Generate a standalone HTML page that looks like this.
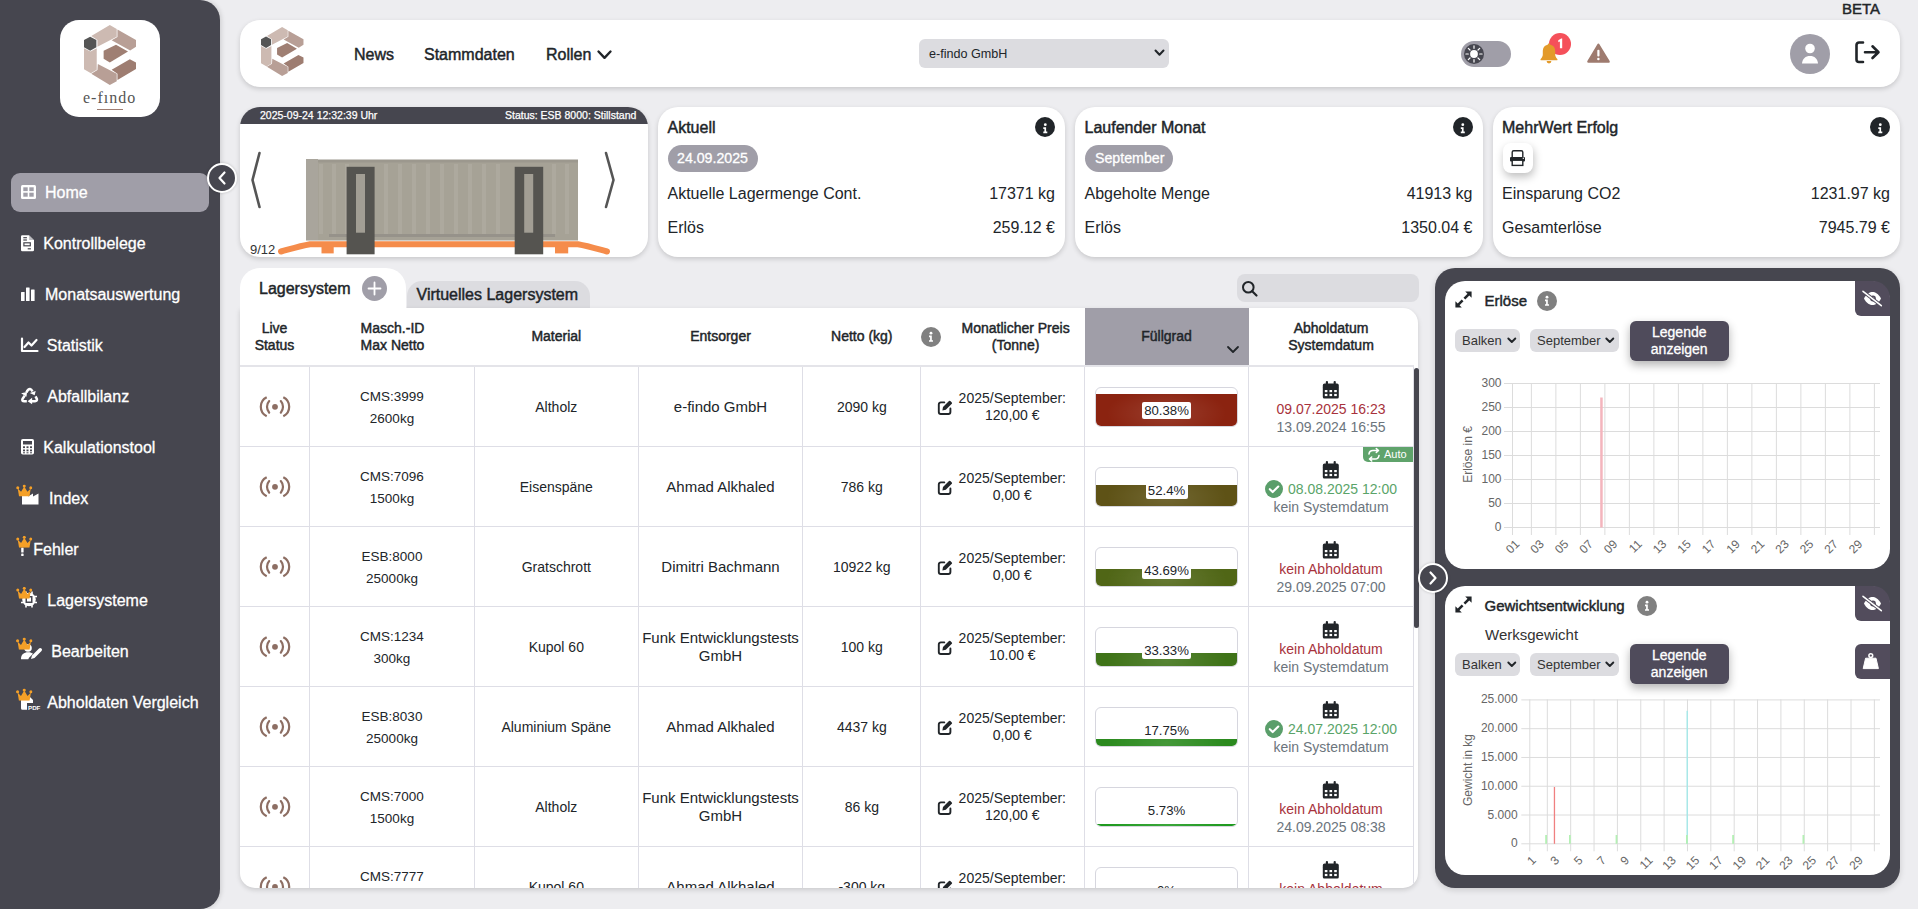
<!DOCTYPE html>
<html><head><meta charset="utf-8">
<style>
*{box-sizing:border-box;margin:0;padding:0}
html,body{width:1918px;height:909px;overflow:hidden}
body{background:#ededf0;font-family:"Liberation Sans",sans-serif;color:#212529;position:relative}
.a{position:absolute;white-space:nowrap}
.t16{font-size:16px;line-height:20px}
.t14{font-size:14px;line-height:17px}
.med{-webkit-text-stroke:0.45px currentColor}
.bold{-webkit-text-stroke:0.5px currentColor}
.card{position:absolute;background:#fff;border-radius:20px;box-shadow:0 2px 5px rgba(0,0,0,.16)}
svg{position:absolute;overflow:visible}
.nav{position:absolute;color:#fff;font-size:16px;line-height:20px;white-space:nowrap;-webkit-text-stroke:0.3px #fff}
.c{text-align:center}
.r{text-align:right}
</style></head>
<body>
<svg width="0" height="0" style="position:absolute">
<defs>
<symbol id="lg" viewBox="50 45 715 825">
<polygon fill="#cdbab2" points="150,195 405,45 500,100 500,205 235,345 235,250"/>
<polygon fill="#b89f96" points="510,108 765,250 765,345 685,395 430,255 510,210"/>
<polygon fill="#9f7f73" points="320,400 490,315 655,410 405,560 320,510"/>
<polygon fill="#cdbab2" points="50,365 140,410 225,365 225,660 145,710 50,655"/>
<polygon fill="#b89f96" points="150,715 235,665 240,580 500,715 500,820 405,870"/>
<polygon fill="#9e7d71" points="510,715 430,660 680,515 765,560 765,650 510,800"/>
<polygon fill="#555555" points="135,205 220,252 220,350 135,398 50,350 50,252"/>
</symbol>
<symbol id="crown" viewBox="0 0 16 12">
<path fill="#f5a027" d="M1.5 4 L4.8 7.2 L8 2 L11.2 7.2 L14.5 4 L13.2 12 L2.8 12 Z"/>
<circle cx="1.5" cy="3.2" r="1.5" fill="#f5a027"/><circle cx="8" cy="1.5" r="1.5" fill="#f5a027"/><circle cx="14.5" cy="3.2" r="1.5" fill="#f5a027"/>
</symbol>
</defs></svg>
<div class="a" style="left:0;top:0;width:220px;height:909px;background:#46464f;border-radius:0 20px 20px 0;box-shadow:1px 0 5px rgba(0,0,0,.15)"></div>
<div class="a" style="left:60px;top:20px;width:100px;height:97px;background:#fff;border-radius:19px"></div>
<svg style="left:83.6px;top:25.3px" width="52" height="60"><use href="#lg"/></svg>
<div class="a" style="left:83px;top:89px;font-family:'Liberation Serif',serif;font-size:16px;line-height:18px;color:#555;letter-spacing:1px">e-fındo</div>
<div class="a" style="left:97px;top:108.5px;width:25.5px;height:1.6px;background:#9e7d71"></div>
<div class="a" style="left:11px;top:173px;width:198px;height:39px;background:#a09ea8;border-radius:9px"></div>
<!-- icons -->
<svg style="left:0;top:0" width="220" height="909">
 <g fill="#fff">
  <!-- home grid -->
  <rect x="21" y="185" width="15" height="14" rx="1.5"/>
  <rect x="23.3" y="187.3" width="4.4" height="3.8" fill="#a09ea8"/><rect x="29.3" y="187.3" width="4.4" height="3.8" fill="#a09ea8"/>
  <rect x="23.3" y="192.7" width="4.4" height="4" fill="#a09ea8"/><rect x="29.3" y="192.7" width="4.4" height="4" fill="#a09ea8"/>
  <!-- file lines -->
  <path d="M22.3 235.2 h6.8 l4.9 4.9 v9.9 a1.3 1.3 0 0 1 -1.3 1.3 h-10.4 a1.3 1.3 0 0 1 -1.3 -1.3 v-13.5 a1.3 1.3 0 0 1 1.3 -1.3z"/>
  <g fill="#46464f"><path d="M29.1 235.2 v4.9 h4.9z" opacity=".35"/>
  <rect x="23.3" y="237.1" width="3.6" height="1.2"/><rect x="23.3" y="239.4" width="3.6" height="1.2"/>
  <rect x="23.3" y="242.2" width="7.6" height="4.2"/><rect x="27.7" y="248.2" width="3.2" height="1.2"/></g>
  <rect x="24.5" y="243.4" width="5.2" height="1.8" fill="#fff"/>
  <!-- bar chart -->
  <rect x="21" y="292" width="3.6" height="9" rx=".5"/><rect x="26" y="287.5" width="3.6" height="13.5" rx=".5"/><rect x="31" y="289.5" width="3.6" height="11.5" rx=".5"/><rect x="36" y="292" width="0" height="0"/>
 </g>
 <g fill="none" stroke="#fff" stroke-width="2.2" stroke-linecap="round" stroke-linejoin="round">
  <!-- line chart -->
  <path d="M22 338.5 V351 H37.5"/>
  <path d="M24.5 347 L28.5 342.5 L31.5 345.5 L36.5 340"/>
 </g>
<svg x="16" y="384" width="26" height="24" viewBox="0 0 985 909" overflow="visible"><g fill="none" stroke="#fff" stroke-width="95" stroke-linejoin="round">
  <path d="M395 320 Q 455 185 535 190 Q 585 195 625 285"/>
  <path d="M330 440 L 245 570 Q 215 650 310 650 L 410 650"/>
  <path d="M740 470 L 790 560 Q 815 650 720 650 L 570 650"/>
 </g><g fill="#fff"><polygon points="520,345 745,265 705,425"/><polygon points="195,355 420,300 395,480"/><polygon points="610,520 440,650 610,770"/></g></svg>

 <g fill="#fff">
  <!-- calculator -->
  <rect x="21" y="439" width="13" height="15.5" rx="1.8"/>
  <rect x="23" y="441" width="9" height="3.5" fill="#46464f"/>
  <g fill="#46464f"><rect x="23" y="446.3" width="2" height="1.8"/><rect x="26.5" y="446.3" width="2" height="1.8"/><rect x="30" y="446.3" width="2" height="1.8"/>
  <rect x="23" y="449.5" width="2" height="1.8"/><rect x="26.5" y="449.5" width="2" height="1.8"/><rect x="30" y="449.5" width="2" height="1.8"/>
  <rect x="23" y="452.3" width="2" height="1"/><rect x="26.5" y="452.3" width="2" height="1"/><rect x="30" y="452.3" width="2" height="1"/></g>
  <!-- industry -->
  <path d="M22 504.5 V496 L28 493.5 V496.5 L33 493.5 V496.5 L38.5 493.5 V504.5 Z"/>
  <!-- exclamation -->
  <rect x="21.2" y="547.5" width="2.4" height="5" rx=".6"/><rect x="21.2" y="553.5" width="2.4" height="2.6" rx=".6"/>
  <!-- chip gear -->
  <circle cx="29" cy="599.5" r="6.8"/>
  <g stroke="#fff" stroke-width="1.6"><path d="M21 596.5h16M21 602.5h16M26 591.5v16M32 591.5v16"/></g>
  <rect x="25.5" y="596" width="7" height="7" fill="#46464f"/><rect x="27" y="597.5" width="4" height="4" fill="#fff"/>
  <!-- user pen -->
  <circle cx="28" cy="648" r="3.8"/>
  <path d="M21 659.2 c0 -5 3 -7 7 -7 c2.5 0 4 .6 5 1.5 l-4 4 l-.7 1.5 z"/>
  <path d="M31 659 l1 -3.5 l7 -7 a1.5 1.5 0 0 1 2.5 2.5 l-7 7 z"/>
  <!-- pdf file -->
  <path d="M21 696 h8 l4 4 v3 h-6 v6.8 h-4.5 a1.5 1.5 0 0 1 -1.5 -1.5 z"/>
 </g>
 <text x="28" y="709.5" font-family="Liberation Sans" font-weight="bold" font-size="6.2" fill="#fff">PDF</text>
 <use href="#crown" x="16" y="484.5" width="16.5" height="12"/>
 <use href="#crown" x="16" y="535.7" width="16.5" height="12"/>
 <use href="#crown" x="16" y="586.8" width="16.5" height="12"/>
 <use href="#crown" x="16" y="637.5" width="16.5" height="12.3"/>
 <use href="#crown" x="16" y="688.5" width="16.5" height="12.3"/>
</svg>
<div class="nav" style="left:45.0px;top:183.3px">Home</div>
<div class="nav" style="left:43.3px;top:234.3px">Kontrollbelege</div>
<div class="nav" style="left:45.0px;top:285.3px">Monatsauswertung</div>
<div class="nav" style="left:46.8px;top:336.3px">Statistik</div>
<div class="nav" style="left:47.3px;top:387.3px">Abfallbilanz</div>
<div class="nav" style="left:43.3px;top:438.3px">Kalkulationstool</div>
<div class="nav" style="left:49.1px;top:489.3px">Index</div>
<div class="nav" style="left:33.3px;top:540.3px">Fehler</div>
<div class="nav" style="left:47.3px;top:591.3px">Lagersysteme</div>
<div class="nav" style="left:51.3px;top:642.3px">Bearbeiten</div>
<div class="nav" style="left:47.3px;top:693.3px">Abholdaten Vergleich</div>
<!-- collapse circle -->
<div class="a" style="left:207px;top:162.5px;width:30px;height:30px;border-radius:50%;background:#46464f;border:2.5px solid #fff;box-shadow:0 0 3px rgba(0,0,0,.2)"></div>
<svg style="left:207px;top:162.5px" width="30" height="30"><path d="M17.5 9.5 L12.5 15 L17.5 20.5" fill="none" stroke="#fff" stroke-width="2.2" stroke-linecap="round" stroke-linejoin="round"/></svg>
<div class="a" style="left:1842px;top:0px;font-size:15px;line-height:18px;color:#212529" ><span class="med">BETA</span></div>
<div class="card" style="left:240px;top:20px;width:1660px;height:67px"></div>
<svg style="left:260px;top:27px" width="44.5" height="49"><use href="#lg" preserveAspectRatio="none"/></svg>
<div class="a med" style="left:354px;top:44.5px;font-size:16px;line-height:20px">News</div>
<div class="a med" style="left:424px;top:44.5px;font-size:16px;line-height:20px">Stammdaten</div>
<div class="a med" style="left:546px;top:44.5px;font-size:16px;line-height:20px">Rollen</div>
<svg style="left:597px;top:50px" width="16" height="10"><path d="M1.5 1.5 L7.5 7.8 L13.5 1.5" fill="none" stroke="#212529" stroke-width="2.4" stroke-linecap="round" stroke-linejoin="round"/></svg>
<div class="a" style="left:919px;top:39px;width:250px;height:29px;background:#dcdce0;border-radius:6px"></div>
<div class="a" style="left:929px;top:46px;font-size:12.6px;line-height:16px;color:#212529">e-findo GmbH</div>
<svg style="left:1154px;top:49px" width="12" height="9"><path d="M1.5 1.5 L5.5 5.8 L9.5 1.5" fill="none" stroke="#212529" stroke-width="2" stroke-linecap="round" stroke-linejoin="round"/></svg>
<!-- toggle -->
<div class="a" style="left:1461px;top:41px;width:50px;height:26px;background:#a09ea8;border-radius:13px"></div>
<svg style="left:1464px;top:44px" width="20" height="20">
 <circle cx="10" cy="10" r="10" fill="#46464f"/>
 <circle cx="10" cy="10" r="3.9" fill="#fff"/>
 <g stroke="#fff" stroke-width="1.2" stroke-linecap="round">
  <path d="M10 1.9v2.4M10 15.7v2.4M1.9 10h2.4M15.7 10h2.4M4.3 4.3l1.7 1.7M14 14l1.7 1.7M4.3 15.7l1.7-1.7M14 6l1.7-1.7"/>
 </g>
</svg>
<!-- bell -->
<div class="a" style="left:1549px;top:33px;width:22px;height:22px;border-radius:50%;background:#f5505a"></div>
<svg style="left:1549px;top:33px" width="22" height="22"><path d="M9.3 7.2 L12.2 5.6 H13.2 V15.2 H10.9 V8.6 L9.3 9.3 Z" fill="#fff"/></svg>
<svg style="left:1538px;top:42px" width="24" height="24">
 <path d="M11 1.5 c0.8 0 1.2 .5 1.3 1.3 c3.1 .6 4.9 3 4.9 6 v3.6 c0 1.6 .8 3.2 2.1 4.5 c.5 .6 .1 1.3 -.6 1.3 H3.3 c-.7 0 -1.1 -.7 -.6 -1.3 c1.3 -1.3 2.1 -2.9 2.1 -4.5 v-3.6 c0 -3 1.8 -5.4 4.9 -6 c.1 -.8 .5 -1.3 1.3 -1.3z" fill="#e39a2a"/>
 <path d="M8.6 19.1 h4.8 a2.4 2.4 0 0 1 -4.8 0z" fill="#e39a2a"/>
</svg>
<!-- warning -->
<svg style="left:1587px;top:43px" width="24" height="21">
 <path d="M11.4 1.8 L21.6 18.6 H1.4 Z" fill="#9e7b6f" stroke="#9e7b6f" stroke-width="2.4" stroke-linejoin="round"/>
 <rect x="10.3" y="6.8" width="2.2" height="6.6" rx="1" fill="#fff"/><circle cx="11.4" cy="16" r="1.25" fill="#fff"/>
</svg>
<!-- avatar -->
<div class="a" style="left:1790px;top:34px;width:40px;height:40px;border-radius:50%;background:#a09ea8"></div>
<svg style="left:1790px;top:34px" width="40" height="40">
 <circle cx="20" cy="14.5" r="4.8" fill="#fff"/>
 <path d="M12 29.5 c0.5 -5 3.5 -7.5 8 -7.5 s7.5 2.5 8 7.5 z" fill="#fff"/>
</svg>
<!-- logout -->
<svg style="left:1854px;top:40px" width="28" height="26">
 <path d="M9 2.5 H5 a2.5 2.5 0 0 0 -2.5 2.5 V19.5 a2.5 2.5 0 0 0 2.5 2.5 H9" fill="none" stroke="#212529" stroke-width="2.6" stroke-linecap="round"/>
 <path d="M11 12.2 H24.5 M18.5 6.3 L24.5 12.2 L18.5 18" fill="none" stroke="#212529" stroke-width="2.6" stroke-linecap="round" stroke-linejoin="round"/>
</svg>
<!-- carousel card -->
<div class="card" style="left:240px;top:107px;width:408px;height:150px;overflow:hidden">
  <div class="a" style="left:0;top:0;width:408px;height:17px;background:#46464f"></div>
</div>
<div class="a med" style="left:260px;top:108px;font-size:10.5px;line-height:14px;color:#fff;-webkit-text-stroke:0.25px #fff">2025-09-24 12:32:39 Uhr</div>
<div class="a med" style="left:505px;top:108px;font-size:10.5px;line-height:14px;color:#fff;-webkit-text-stroke:0.25px #fff">Status: ESB 8000: Stillstand</div>
<svg style="left:240px;top:107px" width="408" height="150">
 <path d="M19.5 46 L12.5 73 L19.5 100" fill="none" stroke="#555" stroke-width="2.6" stroke-linecap="round" stroke-linejoin="round"/>
 <path d="M366 46 L373.5 73 L366 100" fill="none" stroke="#555" stroke-width="2.6" stroke-linecap="round" stroke-linejoin="round"/>
 <!-- container body -->
 <rect x="66" y="53.5" width="272" height="80" fill="#a6a296"/>
 <rect x="66" y="52.5" width="272" height="3" fill="#9c988e"/>
 <g fill="#b3afa6" opacity=".55">
  <rect x="79" y="57" width="4" height="70"/><rect x="92" y="57" width="4" height="70"/><rect x="105" y="57" width="4" height="70"/>
  <rect x="144" y="57" width="4" height="70"/><rect x="158" y="57" width="4" height="70"/><rect x="172" y="57" width="4" height="70"/><rect x="186" y="57" width="4" height="70"/><rect x="200" y="57" width="4" height="70"/><rect x="214" y="57" width="4" height="70"/><rect x="228" y="57" width="4" height="70"/><rect x="242" y="57" width="4" height="70"/><rect x="256" y="57" width="4" height="70"/>
  <rect x="312" y="57" width="4" height="70"/><rect x="325" y="57" width="4" height="70"/>
 </g>
 <rect x="66" y="52" width="12" height="81" fill="#a9a59c"/>
 <rect x="89" y="127" width="226" height="3" fill="#96928a"/>
 <!-- orange base -->
 <path d="M41 144.5 C52 141.5 60 139 70 137.2 H338 C348 139 356 141.5 367 144.5" fill="none" stroke="#f58c4b" stroke-width="6" stroke-linecap="round"/>
 <rect x="81.5" y="139" width="12.2" height="7.4" fill="#f58c4b"/>
 <rect x="315" y="139" width="13.2" height="7.4" fill="#f58c4b"/>
 <!-- posts -->
 <rect x="106.6" y="59.8" width="28" height="87.5" fill="#555450"/>
 <rect x="116" y="67" width="9" height="58.7" fill="#a29e94"/>
 <rect x="274.7" y="59.8" width="28.5" height="87.5" fill="#555450"/>
 <rect x="284.2" y="67" width="9" height="58.7" fill="#a29e94"/>
</svg>
<div class="a" style="left:250px;top:242px;font-size:13px;line-height:15px;color:#333">9/12</div>

<!-- Aktuell -->
<div class="card" style="left:658px;top:107px;width:407px;height:150px"></div>
<div class="a med" style="left:667.5px;top:118px;font-size:16px;line-height:20px">Aktuell</div>
<div class="a" style="left:1035px;top:117px;width:20px;height:20px;border-radius:50%;background:#212529"></div>
<div class="a" style="left:668px;top:145px;width:90px;height:27px;border-radius:14px;background:#a09ea8"></div>
<div class="a med" style="left:677px;top:149px;font-size:14.2px;line-height:18px;color:#fff;-webkit-text-stroke:0.3px #fff">24.09.2025</div>
<div class="a" style="left:667.5px;top:183.5px;font-size:16px;line-height:20px">Aktuelle Lagermenge Cont.</div>
<div class="a r" style="left:855px;top:183.5px;width:200px;font-size:16px;line-height:20px">17371 kg</div>
<div class="a" style="left:667.5px;top:217.7px;font-size:16px;line-height:20px">Erlös</div>
<div class="a r" style="left:855px;top:217.7px;width:200px;font-size:16px;line-height:20px">259.12 €</div>

<!-- Laufender Monat -->
<div class="card" style="left:1075px;top:107px;width:408px;height:150px"></div>
<div class="a med" style="left:1084.5px;top:118px;font-size:16px;line-height:20px">Laufender Monat</div>
<div class="a" style="left:1452.5px;top:117px;width:20px;height:20px;border-radius:50%;background:#212529"></div>
<div class="a" style="left:1085px;top:145px;width:88px;height:27px;border-radius:14px;background:#a09ea8"></div>
<div class="a med" style="left:1095px;top:149px;font-size:14.2px;line-height:18px;color:#fff;-webkit-text-stroke:0.3px #fff">September</div>
<div class="a" style="left:1084.5px;top:183.5px;font-size:16px;line-height:20px">Abgeholte Menge</div>
<div class="a r" style="left:1272.5px;top:183.5px;width:200px;font-size:16px;line-height:20px">41913 kg</div>
<div class="a" style="left:1084.5px;top:217.7px;font-size:16px;line-height:20px">Erlös</div>
<div class="a r" style="left:1272.5px;top:217.7px;width:200px;font-size:16px;line-height:20px">1350.04 €</div>

<!-- MehrWert -->
<div class="card" style="left:1493px;top:107px;width:407px;height:150px"></div>
<div class="a med" style="left:1502px;top:118px;font-size:16px;line-height:20px">MehrWert Erfolg</div>
<div class="a" style="left:1870px;top:117px;width:20px;height:20px;border-radius:50%;background:#212529"></div>
<div class="a" style="left:1503px;top:143px;width:30px;height:30px;border-radius:8px;background:#fff;box-shadow:1px 4px 9px rgba(0,0,0,.25)"></div>
<svg style="left:1503px;top:143px" width="30" height="30">
 <path d="M9.2 14 V9.3 a1.5 1.5 0 0 1 1.5 -1.5 h7.6 a1.5 1.5 0 0 1 1.5 1.5 V14" fill="none" stroke="#212529" stroke-width="1.4"/>
 <rect x="7" y="14" width="15" height="4.6" rx="1" fill="#212529"/>
 <rect x="9.2" y="17.2" width="10.6" height="5.2" fill="#fff" stroke="#212529" stroke-width="1.4"/>
 <circle cx="20.3" cy="15.2" r=".7" fill="#fff"/>
</svg>
<div class="a" style="left:1502px;top:183.5px;font-size:16px;line-height:20px">Einsparung CO2</div>
<div class="a r" style="left:1690px;top:183.5px;width:200px;font-size:16px;line-height:20px">1231.97 kg</div>
<div class="a" style="left:1502px;top:217.7px;font-size:16px;line-height:20px">Gesamterlöse</div>
<div class="a r" style="left:1690px;top:217.7px;width:200px;font-size:16px;line-height:20px">7945.79 €</div>
<svg style="left:0;top:0" width="1918" height="300">
 <g fill="#fff">
  <circle cx="1045.3" cy="124.7" r="1.4"/><path d="M1043.3 127.3 h2.8 v4.3 h1.2 v1.6 h-4 v-1.6 h1.1 v-2.7 h-1.1z"/>
  <circle cx="1462.8" cy="124.7" r="1.4"/><path d="M1460.8 127.3 h2.8 v4.3 h1.2 v1.6 h-4 v-1.6 h1.1 v-2.7 h-1.1z"/>
  <circle cx="1880.3" cy="124.7" r="1.4"/><path d="M1878.3 127.3 h2.8 v4.3 h1.2 v1.6 h-4 v-1.6 h1.1 v-2.7 h-1.1z"/>
 </g>
</svg>
<div class="a" style="left:407px;top:281px;width:183px;height:28px;background:#dcdce0;border-radius:15px 15px 0 0"></div>
<div class="a med" style="left:416.5px;top:285px;font-size:16px;line-height:20px">Virtuelles Lagersystem</div>
<div class="a" style="left:240px;top:308px;width:1178px;height:580px;background:#fff;border-radius:0 15px 15px 15px;box-shadow:0 2px 5px rgba(0,0,0,.15)"></div>
<div class="a" style="left:240px;top:268px;width:166px;height:45px;background:#fff;border-radius:20px 20px 0 0"></div>
<div class="a med" style="left:259px;top:279px;font-size:16px;line-height:20px">Lagersystem</div>
<div class="a" style="left:361.8px;top:275.9px;width:25px;height:25px;border-radius:50%;background:#a09ea8"></div>
<svg style="left:361.8px;top:275.9px" width="25" height="25"><path d="M12.5 6.5v12M6.5 12.5h12" stroke="#fff" stroke-width="1.8" stroke-linecap="round"/></svg>
<div class="a" style="left:1237px;top:273.5px;width:181.5px;height:28.5px;background:#dcdce0;border-radius:8px"></div>
<svg style="left:1241px;top:280px" width="18" height="18"><circle cx="7.3" cy="7.3" r="5.3" fill="none" stroke="#212529" stroke-width="2"/><path d="M11.2 11.2 L15.5 15.5" stroke="#212529" stroke-width="2.2" stroke-linecap="round"/></svg>
<div class="a" style="left:1085px;top:308px;width:163.5px;height:57px;background:#a09ea8"></div>
<svg style="left:1226px;top:345px" width="14" height="10"><path d="M2 2 L7 7 L12 2" fill="none" stroke="#212529" stroke-width="1.8" stroke-linecap="round" stroke-linejoin="round"/></svg>
<div class="a" style="left:240px;top:365px;width:1174px;height:2px;background:#e4e4e9"></div>
<div class="a c med" style="left:174.5px;top:319.7px;width:200px;font-size:14px;line-height:17px">Live</div>
<div class="a c med" style="left:174.5px;top:336.7px;width:200px;font-size:14px;line-height:17px">Status</div>
<div class="a c med" style="left:292.5px;top:319.7px;width:200px;font-size:14px;line-height:17px">Masch.-ID</div>
<div class="a c med" style="left:292.5px;top:336.7px;width:200px;font-size:14px;line-height:17px">Max Netto</div>
<div class="a c med" style="left:456.29999999999995px;top:327.8px;width:200px;font-size:14px;line-height:17px">Material</div>
<div class="a c med" style="left:620.5px;top:327.8px;width:200px;font-size:14px;line-height:17px">Entsorger</div>
<div class="a c med" style="left:761.8px;top:327.8px;width:200px;font-size:14px;line-height:17px">Netto (kg)</div>
<div class="a c med" style="left:915.6px;top:319.7px;width:200px;font-size:14px;line-height:17px">Monatlicher Preis</div>
<div class="a c med" style="left:915.6px;top:336.7px;width:200px;font-size:14px;line-height:17px">(Tonne)</div>
<div class="a c med" style="left:1066.5px;top:327.8px;width:200px;font-size:14px;line-height:17px">Füllgrad</div>
<div class="a c med" style="left:1231px;top:319.7px;width:200px;font-size:14px;line-height:17px">Abholdatum</div>
<div class="a c med" style="left:1231px;top:336.7px;width:200px;font-size:14px;line-height:17px">Systemdatum</div>
<div class="a" style="left:921px;top:327px;width:20px;height:20px;border-radius:50%;background:#808080"></div>
<svg style="left:921px;top:327px" width="20" height="20"><circle cx="10" cy="6.2" r="1.4" fill="#fff"/><path d="M8 8.6 h2.8 v4.6 h1.2 v1.6 h-4 v-1.6 h1.1 v-3 h-1.1z" fill="#fff"/></svg>
<div class="a" style="left:240px;top:367px;width:1178px;height:521px;overflow:hidden;border-radius:0 0 15px 15px">
<div class="a" style="left:-240px;top:-367px;width:1918px;height:909px">
<svg style="left:0;top:0" width="1918" height="909"><g stroke="#dedee6" stroke-width="1">
<path d="M309.5 367 V888"/>
<path d="M474.5 367 V888"/>
<path d="M638.5 367 V888"/>
<path d="M802.5 367 V888"/>
<path d="M920.5 367 V888"/>
<path d="M1084.5 367 V888"/>
<path d="M1248.5 367 V888"/>
<path d="M1413.5 367 V888"/>
<path d="M240 446.5 H1414"/>
<path d="M240 526.5 H1414"/>
<path d="M240 606.5 H1414"/>
<path d="M240 686.5 H1414"/>
<path d="M240 766.5 H1414"/>
<path d="M240 846.5 H1414"/>
</g></svg>
<div class="a c" style="left:282px;top:387.9px;width:220px;font-size:13.5px;line-height:17px;color:#212529">CMS:3999</div>
<div class="a c" style="left:282px;top:410.1px;width:220px;font-size:13.5px;line-height:17px;color:#212529">2600kg</div>
<div class="a c" style="left:446.29999999999995px;top:399.0px;width:220px;font-size:14px;line-height:17px;color:#212529">Altholz</div>
<div class="a c" style="left:610.5px;top:398.3px;width:220px;font-size:15px;line-height:17px;color:#212529">e-findo GmbH</div>
<div class="a c" style="left:751.8px;top:399.0px;width:220px;font-size:14px;line-height:17px;color:#212529">2090 kg</div>
<div class="a c" style="left:902.3px;top:390.0px;width:220px;font-size:14px;line-height:17px;color:#212529">2025/September:</div>
<div class="a c" style="left:902.3px;top:406.7px;width:220px;font-size:14px;line-height:17px;color:#212529">120,00 €</div>
<div class="a" style="left:1095.4px;top:387.1px;width:142.4px;height:39.8px;border:1px solid #d6d6de;border-radius:6px;overflow:hidden;background:#fff"><div class="a" style="left:0;bottom:0;width:100%;height:32.0px;background:radial-gradient(ellipse 60px 25px at 50% 60%, rgba(255,255,255,.12), rgba(255,255,255,0)),#8b2310"></div></div>
<div class="a" style="left:1142.0px;top:401.9px;width:49px;height:17px;background:#fff;border-radius:2px"></div>
<div class="a c" style="left:1056.5px;top:402.0px;width:220px;font-size:13.2px;line-height:17px;color:#212529">80.38%</div>
<div class="a c" style="left:1221px;top:401.2px;width:220px;font-size:14px;line-height:17px;color:#a8323c">09.07.2025 16:23</div>
<div class="a c" style="left:1221px;top:418.5px;width:220px;font-size:14px;line-height:17px;color:#6c757d">13.09.2024 16:55</div>
<div class="a c" style="left:282px;top:467.9px;width:220px;font-size:13.5px;line-height:17px;color:#212529">CMS:7096</div>
<div class="a c" style="left:282px;top:490.1px;width:220px;font-size:13.5px;line-height:17px;color:#212529">1500kg</div>
<div class="a c" style="left:446.29999999999995px;top:479.0px;width:220px;font-size:14px;line-height:17px;color:#212529">Eisenspäne</div>
<div class="a c" style="left:610.5px;top:478.3px;width:220px;font-size:15px;line-height:17px;color:#212529">Ahmad Alkhaled</div>
<div class="a c" style="left:751.8px;top:479.0px;width:220px;font-size:14px;line-height:17px;color:#212529">786 kg</div>
<div class="a c" style="left:902.3px;top:470.0px;width:220px;font-size:14px;line-height:17px;color:#212529">2025/September:</div>
<div class="a c" style="left:902.3px;top:486.7px;width:220px;font-size:14px;line-height:17px;color:#212529">0,00 €</div>
<div class="a" style="left:1095.4px;top:467.1px;width:142.4px;height:39.8px;border:1px solid #d6d6de;border-radius:6px;overflow:hidden;background:#fff"><div class="a" style="left:0;bottom:0;width:100%;height:20.9px;background:radial-gradient(ellipse 60px 25px at 50% 60%, rgba(255,255,255,.12), rgba(255,255,255,0)),#5e5216"></div></div>
<div class="a" style="left:1145.5px;top:481.9px;width:42px;height:17px;background:#fff;border-radius:2px"></div>
<div class="a c" style="left:1056.5px;top:482.0px;width:220px;font-size:13.2px;line-height:17px;color:#212529">52.4%</div>
<div class="a" style="left:1288px;top:480.7px;font-size:14px;line-height:17px;color:#5aa469">08.08.2025 12:00</div>
<div class="a c" style="left:1221px;top:498.5px;width:220px;font-size:14px;line-height:17px;color:#6c757d">kein Systemdatum</div>
<div class="a" style="left:1363px;top:447.1px;width:50px;height:14.7px;background:#5fa36b;border-radius:0 0 0 5px"></div>
<div class="a" style="left:1384px;top:446.5px;font-size:11px;line-height:15px;color:#fff">Auto</div>
<div class="a c" style="left:282px;top:547.9px;width:220px;font-size:13.5px;line-height:17px;color:#212529">ESB:8000</div>
<div class="a c" style="left:282px;top:570.1px;width:220px;font-size:13.5px;line-height:17px;color:#212529">25000kg</div>
<div class="a c" style="left:446.29999999999995px;top:559.0px;width:220px;font-size:14px;line-height:17px;color:#212529">Gratschrott</div>
<div class="a c" style="left:610.5px;top:558.4px;width:220px;font-size:15px;line-height:17px;color:#212529">Dimitri Bachmann</div>
<div class="a c" style="left:751.8px;top:559.0px;width:220px;font-size:14px;line-height:17px;color:#212529">10922 kg</div>
<div class="a c" style="left:902.3px;top:550.0px;width:220px;font-size:14px;line-height:17px;color:#212529">2025/September:</div>
<div class="a c" style="left:902.3px;top:566.7px;width:220px;font-size:14px;line-height:17px;color:#212529">0,00 €</div>
<div class="a" style="left:1095.4px;top:547.1px;width:142.4px;height:39.8px;border:1px solid #d6d6de;border-radius:6px;overflow:hidden;background:#fff"><div class="a" style="left:0;bottom:0;width:100%;height:17.4px;background:radial-gradient(ellipse 60px 25px at 50% 60%, rgba(255,255,255,.12), rgba(255,255,255,0)),#506616"></div></div>
<div class="a" style="left:1142.0px;top:561.9px;width:49px;height:17px;background:#fff;border-radius:2px"></div>
<div class="a c" style="left:1056.5px;top:562.0px;width:220px;font-size:13.2px;line-height:17px;color:#212529">43.69%</div>
<div class="a c" style="left:1221px;top:561.2px;width:220px;font-size:14px;line-height:17px;color:#a8323c">kein Abholdatum</div>
<div class="a c" style="left:1221px;top:578.5px;width:220px;font-size:14px;line-height:17px;color:#6c757d">29.09.2025 07:00</div>
<div class="a c" style="left:282px;top:627.9px;width:220px;font-size:13.5px;line-height:17px;color:#212529">CMS:1234</div>
<div class="a c" style="left:282px;top:650.1px;width:220px;font-size:13.5px;line-height:17px;color:#212529">300kg</div>
<div class="a c" style="left:446.29999999999995px;top:639.0px;width:220px;font-size:14px;line-height:17px;color:#212529">Kupol 60</div>
<div class="a c" style="left:610.5px;top:628.5px;width:220px;font-size:15px;line-height:17px;color:#212529">Funk Entwicklungstests</div>
<div class="a c" style="left:610.5px;top:647.1px;width:220px;font-size:15px;line-height:17px;color:#212529">GmbH</div>
<div class="a c" style="left:751.8px;top:639.0px;width:220px;font-size:14px;line-height:17px;color:#212529">100 kg</div>
<div class="a c" style="left:902.3px;top:630.0px;width:220px;font-size:14px;line-height:17px;color:#212529">2025/September:</div>
<div class="a c" style="left:902.3px;top:646.7px;width:220px;font-size:14px;line-height:17px;color:#212529">10.00 €</div>
<div class="a" style="left:1095.4px;top:627.1px;width:142.4px;height:39.8px;border:1px solid #d6d6de;border-radius:6px;overflow:hidden;background:#fff"><div class="a" style="left:0;bottom:0;width:100%;height:13.3px;background:radial-gradient(ellipse 60px 25px at 50% 60%, rgba(255,255,255,.12), rgba(255,255,255,0)),#3f7318"></div></div>
<div class="a" style="left:1142.0px;top:641.9px;width:49px;height:17px;background:#fff;border-radius:2px"></div>
<div class="a c" style="left:1056.5px;top:642.0px;width:220px;font-size:13.2px;line-height:17px;color:#212529">33.33%</div>
<div class="a c" style="left:1221px;top:641.2px;width:220px;font-size:14px;line-height:17px;color:#a8323c">kein Abholdatum</div>
<div class="a c" style="left:1221px;top:658.5px;width:220px;font-size:14px;line-height:17px;color:#6c757d">kein Systemdatum</div>
<div class="a c" style="left:282px;top:707.9px;width:220px;font-size:13.5px;line-height:17px;color:#212529">ESB:8030</div>
<div class="a c" style="left:282px;top:730.1px;width:220px;font-size:13.5px;line-height:17px;color:#212529">25000kg</div>
<div class="a c" style="left:446.29999999999995px;top:719.0px;width:220px;font-size:14px;line-height:17px;color:#212529">Aluminium Späne</div>
<div class="a c" style="left:610.5px;top:718.4px;width:220px;font-size:15px;line-height:17px;color:#212529">Ahmad Alkhaled</div>
<div class="a c" style="left:751.8px;top:719.0px;width:220px;font-size:14px;line-height:17px;color:#212529">4437 kg</div>
<div class="a c" style="left:902.3px;top:710.0px;width:220px;font-size:14px;line-height:17px;color:#212529">2025/September:</div>
<div class="a c" style="left:902.3px;top:726.7px;width:220px;font-size:14px;line-height:17px;color:#212529">0,00 €</div>
<div class="a" style="left:1095.4px;top:707.1px;width:142.4px;height:39.8px;border:1px solid #d6d6de;border-radius:6px;overflow:hidden;background:#fff"><div class="a" style="left:0;bottom:0;width:100%;height:7.1px;background:radial-gradient(ellipse 60px 25px at 50% 60%, rgba(255,255,255,.12), rgba(255,255,255,0)),#2b8a1e"></div></div>
<div class="a c" style="left:1056.5px;top:722.0px;width:220px;font-size:13.2px;line-height:17px;color:#212529">17.75%</div>
<div class="a" style="left:1288px;top:720.7px;font-size:14px;line-height:17px;color:#5aa469">24.07.2025 12:00</div>
<div class="a c" style="left:1221px;top:738.5px;width:220px;font-size:14px;line-height:17px;color:#6c757d">kein Systemdatum</div>
<div class="a c" style="left:282px;top:787.9px;width:220px;font-size:13.5px;line-height:17px;color:#212529">CMS:7000</div>
<div class="a c" style="left:282px;top:810.1px;width:220px;font-size:13.5px;line-height:17px;color:#212529">1500kg</div>
<div class="a c" style="left:446.29999999999995px;top:799.0px;width:220px;font-size:14px;line-height:17px;color:#212529">Altholz</div>
<div class="a c" style="left:610.5px;top:788.5px;width:220px;font-size:15px;line-height:17px;color:#212529">Funk Entwicklungstests</div>
<div class="a c" style="left:610.5px;top:807.1px;width:220px;font-size:15px;line-height:17px;color:#212529">GmbH</div>
<div class="a c" style="left:751.8px;top:799.0px;width:220px;font-size:14px;line-height:17px;color:#212529">86 kg</div>
<div class="a c" style="left:902.3px;top:790.0px;width:220px;font-size:14px;line-height:17px;color:#212529">2025/September:</div>
<div class="a c" style="left:902.3px;top:806.7px;width:220px;font-size:14px;line-height:17px;color:#212529">120,00 €</div>
<div class="a" style="left:1095.4px;top:787.1px;width:142.4px;height:39.8px;border:1px solid #d6d6de;border-radius:6px;overflow:hidden;background:#fff"><div class="a" style="left:0;bottom:0;width:100%;height:2.3px;background:radial-gradient(ellipse 60px 25px at 50% 60%, rgba(255,255,255,.12), rgba(255,255,255,0)),#1f9a1f"></div></div>
<div class="a c" style="left:1056.5px;top:802.0px;width:220px;font-size:13.2px;line-height:17px;color:#212529">5.73%</div>
<div class="a c" style="left:1221px;top:801.2px;width:220px;font-size:14px;line-height:17px;color:#a8323c">kein Abholdatum</div>
<div class="a c" style="left:1221px;top:818.5px;width:220px;font-size:14px;line-height:17px;color:#6c757d">24.09.2025 08:38</div>
<div class="a c" style="left:282px;top:867.9px;width:220px;font-size:13.5px;line-height:17px;color:#212529">CMS:7777</div>
<div class="a c" style="left:282px;top:890.1px;width:220px;font-size:13.5px;line-height:17px;color:#212529">300kg</div>
<div class="a c" style="left:446.29999999999995px;top:879.0px;width:220px;font-size:14px;line-height:17px;color:#212529">Kupol 60</div>
<div class="a c" style="left:610.5px;top:878.4px;width:220px;font-size:15px;line-height:17px;color:#212529">Ahmad Alkhaled</div>
<div class="a c" style="left:751.8px;top:879.0px;width:220px;font-size:14px;line-height:17px;color:#212529">-300 kg</div>
<div class="a c" style="left:902.3px;top:870.0px;width:220px;font-size:14px;line-height:17px;color:#212529">2025/September:</div>
<div class="a c" style="left:902.3px;top:886.7px;width:220px;font-size:14px;line-height:17px;color:#212529">0,00 €</div>
<div class="a" style="left:1095.4px;top:867.1px;width:142.4px;height:39.8px;border:1px solid #d6d6de;border-radius:6px;overflow:hidden;background:#fff"><div class="a" style="left:0;bottom:0;width:100%;height:0.0px;background:radial-gradient(ellipse 60px 25px at 50% 60%, rgba(255,255,255,.12), rgba(255,255,255,0)),#1f9a1f"></div></div>
<div class="a c" style="left:1056.5px;top:882.0px;width:220px;font-size:13.2px;line-height:17px;color:#212529">0%</div>
<div class="a c" style="left:1221px;top:881.2px;width:220px;font-size:14px;line-height:17px;color:#a8323c">kein Abholdatum</div>
<div class="a c" style="left:1221px;top:898.5px;width:220px;font-size:14px;line-height:17px;color:#6c757d">kein Systemdatum</div>
<svg style="left:0;top:0" width="1918" height="909"><g transform="translate(275 406.85)" fill="none" stroke="#8d6e63" stroke-width="2.2" stroke-linecap="round"><circle r="2.9" fill="#8d6e63" stroke="none"/><path d="M-5.8 -5.8 A8.74 8.74 0 0 0 -5.8 5.8 M5.8 -5.8 A8.74 8.74 0 0 1 5.8 5.8"/><path stroke-linecap="butt" d="M-8.3 -9.5 A10.6 10.6 0 0 0 -8.3 9.5 M8.3 -9.5 A10.6 10.6 0 0 1 8.3 9.5"/></g><g transform="translate(937.8 400.2)"><path d="M6.5 2.2 H3 a2 2 0 0 0 -2 2 V11.8 a2 2 0 0 0 2 2 H10.6 a2 2 0 0 0 2 -2 V8.3" fill="none" stroke="#212529" stroke-width="1.9" stroke-linecap="round"/><path d="M5.2 6.8 L11.2 0.8 a1 1 0 0 1 1.4 0 L14 2.2 a1 1 0 0 1 0 1.4 L8 9.6 L4.6 10.2 Z" fill="#212529"/></g><g transform="translate(1322.8 381)" fill="#212529"><rect x="3" y="0" width="2.2" height="3.5" rx="1"/><rect x="10.8" y="0" width="2.2" height="3.5" rx="1"/><path d="M0 4.3 a1.8 1.8 0 0 1 1.8 -1.8 H14.2 a1.8 1.8 0 0 1 1.8 1.8 V6.2 H0 Z"/><path d="M0 6 H16 V16 a1.5 1.5 0 0 1 -1.5 1.5 H1.5 a1.5 1.5 0 0 1 -1.5 -1.5 Z"/><g fill="#fff"><rect x="2" y="9" width="2.6" height="2.2"/><rect x="6.7" y="9" width="2.6" height="2.2"/><rect x="11.4" y="9" width="2.6" height="2.2"/><rect x="2" y="12.9" width="2.6" height="2.2"/><rect x="6.7" y="12.9" width="2.6" height="2.2"/><rect x="11.4" y="12.9" width="2.6" height="2.2"/></g></g><g transform="translate(275 486.85)" fill="none" stroke="#8d6e63" stroke-width="2.2" stroke-linecap="round"><circle r="2.9" fill="#8d6e63" stroke="none"/><path d="M-5.8 -5.8 A8.74 8.74 0 0 0 -5.8 5.8 M5.8 -5.8 A8.74 8.74 0 0 1 5.8 5.8"/><path stroke-linecap="butt" d="M-8.3 -9.5 A10.6 10.6 0 0 0 -8.3 9.5 M8.3 -9.5 A10.6 10.6 0 0 1 8.3 9.5"/></g><g transform="translate(937.8 480.2)"><path d="M6.5 2.2 H3 a2 2 0 0 0 -2 2 V11.8 a2 2 0 0 0 2 2 H10.6 a2 2 0 0 0 2 -2 V8.3" fill="none" stroke="#212529" stroke-width="1.9" stroke-linecap="round"/><path d="M5.2 6.8 L11.2 0.8 a1 1 0 0 1 1.4 0 L14 2.2 a1 1 0 0 1 0 1.4 L8 9.6 L4.6 10.2 Z" fill="#212529"/></g><g transform="translate(1322.8 461)" fill="#212529"><rect x="3" y="0" width="2.2" height="3.5" rx="1"/><rect x="10.8" y="0" width="2.2" height="3.5" rx="1"/><path d="M0 4.3 a1.8 1.8 0 0 1 1.8 -1.8 H14.2 a1.8 1.8 0 0 1 1.8 1.8 V6.2 H0 Z"/><path d="M0 6 H16 V16 a1.5 1.5 0 0 1 -1.5 1.5 H1.5 a1.5 1.5 0 0 1 -1.5 -1.5 Z"/><g fill="#fff"><rect x="2" y="9" width="2.6" height="2.2"/><rect x="6.7" y="9" width="2.6" height="2.2"/><rect x="11.4" y="9" width="2.6" height="2.2"/><rect x="2" y="12.9" width="2.6" height="2.2"/><rect x="6.7" y="12.9" width="2.6" height="2.2"/><rect x="11.4" y="12.9" width="2.6" height="2.2"/></g></g><g transform="translate(1274 489)"><circle r="9" fill="#5a9e6a"/><path d="M-4.2 0.2 L-1.3 3.1 L4.3 -2.5" fill="none" stroke="#fff" stroke-width="2.1" stroke-linecap="round" stroke-linejoin="round"/></g><g transform="translate(1368 449)" fill="none" stroke="#fff" stroke-width="1.6" stroke-linecap="round" stroke-linejoin="round"><path d="M1 5 a4 4 0 0 1 4 -3.5 H10 M8.3 -0.5 L10.5 1.5 L8.3 3.5"/><path d="M11 6.5 a4 4 0 0 1 -4 3.5 H2 M3.7 12 L1.5 10 L3.7 8"/></g><g transform="translate(275 566.85)" fill="none" stroke="#8d6e63" stroke-width="2.2" stroke-linecap="round"><circle r="2.9" fill="#8d6e63" stroke="none"/><path d="M-5.8 -5.8 A8.74 8.74 0 0 0 -5.8 5.8 M5.8 -5.8 A8.74 8.74 0 0 1 5.8 5.8"/><path stroke-linecap="butt" d="M-8.3 -9.5 A10.6 10.6 0 0 0 -8.3 9.5 M8.3 -9.5 A10.6 10.6 0 0 1 8.3 9.5"/></g><g transform="translate(937.8 560.2)"><path d="M6.5 2.2 H3 a2 2 0 0 0 -2 2 V11.8 a2 2 0 0 0 2 2 H10.6 a2 2 0 0 0 2 -2 V8.3" fill="none" stroke="#212529" stroke-width="1.9" stroke-linecap="round"/><path d="M5.2 6.8 L11.2 0.8 a1 1 0 0 1 1.4 0 L14 2.2 a1 1 0 0 1 0 1.4 L8 9.6 L4.6 10.2 Z" fill="#212529"/></g><g transform="translate(1322.8 541)" fill="#212529"><rect x="3" y="0" width="2.2" height="3.5" rx="1"/><rect x="10.8" y="0" width="2.2" height="3.5" rx="1"/><path d="M0 4.3 a1.8 1.8 0 0 1 1.8 -1.8 H14.2 a1.8 1.8 0 0 1 1.8 1.8 V6.2 H0 Z"/><path d="M0 6 H16 V16 a1.5 1.5 0 0 1 -1.5 1.5 H1.5 a1.5 1.5 0 0 1 -1.5 -1.5 Z"/><g fill="#fff"><rect x="2" y="9" width="2.6" height="2.2"/><rect x="6.7" y="9" width="2.6" height="2.2"/><rect x="11.4" y="9" width="2.6" height="2.2"/><rect x="2" y="12.9" width="2.6" height="2.2"/><rect x="6.7" y="12.9" width="2.6" height="2.2"/><rect x="11.4" y="12.9" width="2.6" height="2.2"/></g></g><g transform="translate(275 646.85)" fill="none" stroke="#8d6e63" stroke-width="2.2" stroke-linecap="round"><circle r="2.9" fill="#8d6e63" stroke="none"/><path d="M-5.8 -5.8 A8.74 8.74 0 0 0 -5.8 5.8 M5.8 -5.8 A8.74 8.74 0 0 1 5.8 5.8"/><path stroke-linecap="butt" d="M-8.3 -9.5 A10.6 10.6 0 0 0 -8.3 9.5 M8.3 -9.5 A10.6 10.6 0 0 1 8.3 9.5"/></g><g transform="translate(937.8 640.2)"><path d="M6.5 2.2 H3 a2 2 0 0 0 -2 2 V11.8 a2 2 0 0 0 2 2 H10.6 a2 2 0 0 0 2 -2 V8.3" fill="none" stroke="#212529" stroke-width="1.9" stroke-linecap="round"/><path d="M5.2 6.8 L11.2 0.8 a1 1 0 0 1 1.4 0 L14 2.2 a1 1 0 0 1 0 1.4 L8 9.6 L4.6 10.2 Z" fill="#212529"/></g><g transform="translate(1322.8 621)" fill="#212529"><rect x="3" y="0" width="2.2" height="3.5" rx="1"/><rect x="10.8" y="0" width="2.2" height="3.5" rx="1"/><path d="M0 4.3 a1.8 1.8 0 0 1 1.8 -1.8 H14.2 a1.8 1.8 0 0 1 1.8 1.8 V6.2 H0 Z"/><path d="M0 6 H16 V16 a1.5 1.5 0 0 1 -1.5 1.5 H1.5 a1.5 1.5 0 0 1 -1.5 -1.5 Z"/><g fill="#fff"><rect x="2" y="9" width="2.6" height="2.2"/><rect x="6.7" y="9" width="2.6" height="2.2"/><rect x="11.4" y="9" width="2.6" height="2.2"/><rect x="2" y="12.9" width="2.6" height="2.2"/><rect x="6.7" y="12.9" width="2.6" height="2.2"/><rect x="11.4" y="12.9" width="2.6" height="2.2"/></g></g><g transform="translate(275 726.85)" fill="none" stroke="#8d6e63" stroke-width="2.2" stroke-linecap="round"><circle r="2.9" fill="#8d6e63" stroke="none"/><path d="M-5.8 -5.8 A8.74 8.74 0 0 0 -5.8 5.8 M5.8 -5.8 A8.74 8.74 0 0 1 5.8 5.8"/><path stroke-linecap="butt" d="M-8.3 -9.5 A10.6 10.6 0 0 0 -8.3 9.5 M8.3 -9.5 A10.6 10.6 0 0 1 8.3 9.5"/></g><g transform="translate(937.8 720.2)"><path d="M6.5 2.2 H3 a2 2 0 0 0 -2 2 V11.8 a2 2 0 0 0 2 2 H10.6 a2 2 0 0 0 2 -2 V8.3" fill="none" stroke="#212529" stroke-width="1.9" stroke-linecap="round"/><path d="M5.2 6.8 L11.2 0.8 a1 1 0 0 1 1.4 0 L14 2.2 a1 1 0 0 1 0 1.4 L8 9.6 L4.6 10.2 Z" fill="#212529"/></g><g transform="translate(1322.8 701)" fill="#212529"><rect x="3" y="0" width="2.2" height="3.5" rx="1"/><rect x="10.8" y="0" width="2.2" height="3.5" rx="1"/><path d="M0 4.3 a1.8 1.8 0 0 1 1.8 -1.8 H14.2 a1.8 1.8 0 0 1 1.8 1.8 V6.2 H0 Z"/><path d="M0 6 H16 V16 a1.5 1.5 0 0 1 -1.5 1.5 H1.5 a1.5 1.5 0 0 1 -1.5 -1.5 Z"/><g fill="#fff"><rect x="2" y="9" width="2.6" height="2.2"/><rect x="6.7" y="9" width="2.6" height="2.2"/><rect x="11.4" y="9" width="2.6" height="2.2"/><rect x="2" y="12.9" width="2.6" height="2.2"/><rect x="6.7" y="12.9" width="2.6" height="2.2"/><rect x="11.4" y="12.9" width="2.6" height="2.2"/></g></g><g transform="translate(1274 729)"><circle r="9" fill="#5a9e6a"/><path d="M-4.2 0.2 L-1.3 3.1 L4.3 -2.5" fill="none" stroke="#fff" stroke-width="2.1" stroke-linecap="round" stroke-linejoin="round"/></g><g transform="translate(275 806.85)" fill="none" stroke="#8d6e63" stroke-width="2.2" stroke-linecap="round"><circle r="2.9" fill="#8d6e63" stroke="none"/><path d="M-5.8 -5.8 A8.74 8.74 0 0 0 -5.8 5.8 M5.8 -5.8 A8.74 8.74 0 0 1 5.8 5.8"/><path stroke-linecap="butt" d="M-8.3 -9.5 A10.6 10.6 0 0 0 -8.3 9.5 M8.3 -9.5 A10.6 10.6 0 0 1 8.3 9.5"/></g><g transform="translate(937.8 800.2)"><path d="M6.5 2.2 H3 a2 2 0 0 0 -2 2 V11.8 a2 2 0 0 0 2 2 H10.6 a2 2 0 0 0 2 -2 V8.3" fill="none" stroke="#212529" stroke-width="1.9" stroke-linecap="round"/><path d="M5.2 6.8 L11.2 0.8 a1 1 0 0 1 1.4 0 L14 2.2 a1 1 0 0 1 0 1.4 L8 9.6 L4.6 10.2 Z" fill="#212529"/></g><g transform="translate(1322.8 781)" fill="#212529"><rect x="3" y="0" width="2.2" height="3.5" rx="1"/><rect x="10.8" y="0" width="2.2" height="3.5" rx="1"/><path d="M0 4.3 a1.8 1.8 0 0 1 1.8 -1.8 H14.2 a1.8 1.8 0 0 1 1.8 1.8 V6.2 H0 Z"/><path d="M0 6 H16 V16 a1.5 1.5 0 0 1 -1.5 1.5 H1.5 a1.5 1.5 0 0 1 -1.5 -1.5 Z"/><g fill="#fff"><rect x="2" y="9" width="2.6" height="2.2"/><rect x="6.7" y="9" width="2.6" height="2.2"/><rect x="11.4" y="9" width="2.6" height="2.2"/><rect x="2" y="12.9" width="2.6" height="2.2"/><rect x="6.7" y="12.9" width="2.6" height="2.2"/><rect x="11.4" y="12.9" width="2.6" height="2.2"/></g></g><g transform="translate(275 886.85)" fill="none" stroke="#8d6e63" stroke-width="2.2" stroke-linecap="round"><circle r="2.9" fill="#8d6e63" stroke="none"/><path d="M-5.8 -5.8 A8.74 8.74 0 0 0 -5.8 5.8 M5.8 -5.8 A8.74 8.74 0 0 1 5.8 5.8"/><path stroke-linecap="butt" d="M-8.3 -9.5 A10.6 10.6 0 0 0 -8.3 9.5 M8.3 -9.5 A10.6 10.6 0 0 1 8.3 9.5"/></g><g transform="translate(937.8 880.2)"><path d="M6.5 2.2 H3 a2 2 0 0 0 -2 2 V11.8 a2 2 0 0 0 2 2 H10.6 a2 2 0 0 0 2 -2 V8.3" fill="none" stroke="#212529" stroke-width="1.9" stroke-linecap="round"/><path d="M5.2 6.8 L11.2 0.8 a1 1 0 0 1 1.4 0 L14 2.2 a1 1 0 0 1 0 1.4 L8 9.6 L4.6 10.2 Z" fill="#212529"/></g><g transform="translate(1322.8 861)" fill="#212529"><rect x="3" y="0" width="2.2" height="3.5" rx="1"/><rect x="10.8" y="0" width="2.2" height="3.5" rx="1"/><path d="M0 4.3 a1.8 1.8 0 0 1 1.8 -1.8 H14.2 a1.8 1.8 0 0 1 1.8 1.8 V6.2 H0 Z"/><path d="M0 6 H16 V16 a1.5 1.5 0 0 1 -1.5 1.5 H1.5 a1.5 1.5 0 0 1 -1.5 -1.5 Z"/><g fill="#fff"><rect x="2" y="9" width="2.6" height="2.2"/><rect x="6.7" y="9" width="2.6" height="2.2"/><rect x="11.4" y="9" width="2.6" height="2.2"/><rect x="2" y="12.9" width="2.6" height="2.2"/><rect x="6.7" y="12.9" width="2.6" height="2.2"/><rect x="11.4" y="12.9" width="2.6" height="2.2"/></g></g></svg>
</div></div>
<div class="a" style="left:1414px;top:368px;width:5px;height:260px;background:#46464f;border-radius:3px"></div><div class="a" style="left:1435px;top:267.5px;width:465px;height:620.5px;background:#46464f;border-radius:20px;box-shadow:0 2px 6px rgba(0,0,0,.15)"></div>
<div class="a" style="left:1445px;top:280.5px;width:445px;height:288.5px;background:#fff;border-radius:20px"></div>
<div class="a" style="left:1445px;top:586px;width:445px;height:288.5px;background:#fff;border-radius:20px"></div>
<div class="a" style="left:1855px;top:281px;width:35px;height:35px;background:#524c5c;border-radius:0 17px 0 6px"></div>
<svg style="left:1855px;top:281px" width="35" height="35"><g transform="translate(17.5 17.5)"><path d="M-8.5 0 C-6 -5 -2.5 -6.5 0 -6.5 C2.5 -6.5 6 -5 8.5 0 C6 5 2.5 6.5 0 6.5 C-2.5 6.5 -6 5 -8.5 0Z" fill="#fff"/><circle cx=".5" cy="0" r="2.9" fill="#524c5c"/><circle cx=".5" cy="0" r="1.3" fill="#fff"/><path d="M-9.5 -7.2 L8.8 7.2" stroke="#524c5c" stroke-width="3.4"/><path d="M-9.5 -7.2 L8.8 7.2" stroke="#fff" stroke-width="1.6" stroke-linecap="round"/></g></svg>
<div class="a" style="left:1855px;top:586px;width:35px;height:35px;background:#524c5c;border-radius:0 17px 0 6px"></div>
<svg style="left:1855px;top:586px" width="35" height="35"><g transform="translate(17.5 17.5)"><path d="M-8.5 0 C-6 -5 -2.5 -6.5 0 -6.5 C2.5 -6.5 6 -5 8.5 0 C6 5 2.5 6.5 0 6.5 C-2.5 6.5 -6 5 -8.5 0Z" fill="#fff"/><circle cx=".5" cy="0" r="2.9" fill="#524c5c"/><circle cx=".5" cy="0" r="1.3" fill="#fff"/><path d="M-9.5 -7.2 L8.8 7.2" stroke="#524c5c" stroke-width="3.4"/><path d="M-9.5 -7.2 L8.8 7.2" stroke="#fff" stroke-width="1.6" stroke-linecap="round"/></g></svg>
<div class="a" style="left:1855px;top:644px;width:35px;height:35px;background:#524c5c;border-radius:6px 0 0 6px"></div>
<svg style="left:1855px;top:644px" width="35" height="35"><circle cx="15.8" cy="11.6" r="1.9" fill="none" stroke="#fff" stroke-width="1.5"/><path d="M10.6 14.2 H21 L23.4 24.6 H8.2 Z" fill="#fff" stroke="#fff" stroke-width="1" stroke-linejoin="round"/></svg>
<svg style="left:1455px;top:291px" width="17" height="17"><g fill="#212529"><path d="M16.6 0.4 V6.8 L14.3 4.5 L10.3 8.5 L8.5 6.7 L12.5 2.7 L10.2 0.4Z"/><path d="M0.4 16.6 V10.2 L2.7 12.5 L6.7 8.5 L8.5 10.3 L4.5 14.3 L6.8 16.6Z"/></g></svg>
<svg style="left:1455px;top:596px" width="17" height="17"><g fill="#212529"><path d="M16.6 0.4 V6.8 L14.3 4.5 L10.3 8.5 L8.5 6.7 L12.5 2.7 L10.2 0.4Z"/><path d="M0.4 16.6 V10.2 L2.7 12.5 L6.7 8.5 L8.5 10.3 L4.5 14.3 L6.8 16.6Z"/></g></svg>
<div class="a med" style="left:1484.5px;top:291px;font-size:15px;line-height:20px">Erlöse</div>
<div class="a" style="left:1537px;top:290.5px;width:20px;height:20px;border-radius:50%;background:#808080"></div>
<svg style="left:1537px;top:290.5px" width="20" height="20"><circle cx="10" cy="6.2" r="1.4" fill="#fff"/><path d="M8 8.6 h2.8 v4.6 h1.2 v1.6 h-4 v-1.6 h1.1 v-3 h-1.1z" fill="#fff"/></svg>
<div class="a med" style="left:1484.5px;top:596px;font-size:15px;line-height:20px">Gewichtsentwicklung</div>
<div class="a" style="left:1637px;top:595.5px;width:20px;height:20px;border-radius:50%;background:#808080"></div>
<svg style="left:1637px;top:595.5px" width="20" height="20"><circle cx="10" cy="6.2" r="1.4" fill="#fff"/><path d="M8 8.6 h2.8 v4.6 h1.2 v1.6 h-4 v-1.6 h1.1 v-3 h-1.1z" fill="#fff"/></svg>
<div class="a" style="left:1485px;top:624.8px;font-size:15px;line-height:20px;color:#333">Werksgewicht</div>
<div class="a" style="left:1455px;top:329px;width:65px;height:22.5px;background:#dcdce0;border-radius:6px"></div>
<div class="a" style="left:1462px;top:332.5px;font-size:13px;line-height:16px;color:#333">Balken</div>
<div class="a" style="left:1530px;top:329px;width:88.5px;height:22.5px;background:#dcdce0;border-radius:6px"></div>
<div class="a" style="left:1537px;top:332.5px;font-size:13px;line-height:16px;color:#333">September</div>
<svg style="left:1506.5px;top:336.5px" width="10" height="8"><path d="M1.3 1.5 L4.8 5 L8.3 1.5" fill="none" stroke="#212529" stroke-width="1.9" stroke-linecap="round" stroke-linejoin="round"/></svg>
<svg style="left:1604.5px;top:336.5px" width="10" height="8"><path d="M1.3 1.5 L4.8 5 L8.3 1.5" fill="none" stroke="#212529" stroke-width="1.9" stroke-linecap="round" stroke-linejoin="round"/></svg>
<div class="a" style="left:1629.5px;top:321px;width:99.5px;height:40px;background:#4f4b5b;border-radius:6px;box-shadow:0 4px 10px rgba(0,0,0,.3)"></div>
<div class="a c med" style="left:1629.5px;top:323.5px;width:99.5px;font-size:14px;line-height:17px;color:#fff;-webkit-text-stroke:0.3px #fff">Legende<br>anzeigen</div>
<div class="a" style="left:1455px;top:653.3px;width:65px;height:22.5px;background:#dcdce0;border-radius:6px"></div>
<div class="a" style="left:1462px;top:656.8px;font-size:13px;line-height:16px;color:#333">Balken</div>
<div class="a" style="left:1530px;top:653.3px;width:88.5px;height:22.5px;background:#dcdce0;border-radius:6px"></div>
<div class="a" style="left:1537px;top:656.8px;font-size:13px;line-height:16px;color:#333">September</div>
<svg style="left:1506.5px;top:660.8px" width="10" height="8"><path d="M1.3 1.5 L4.8 5 L8.3 1.5" fill="none" stroke="#212529" stroke-width="1.9" stroke-linecap="round" stroke-linejoin="round"/></svg>
<svg style="left:1604.5px;top:660.8px" width="10" height="8"><path d="M1.3 1.5 L4.8 5 L8.3 1.5" fill="none" stroke="#212529" stroke-width="1.9" stroke-linecap="round" stroke-linejoin="round"/></svg>
<div class="a" style="left:1629.5px;top:644px;width:99.5px;height:40px;background:#4f4b5b;border-radius:6px;box-shadow:0 4px 10px rgba(0,0,0,.3)"></div>
<div class="a c med" style="left:1629.5px;top:646.5px;width:99.5px;font-size:14px;line-height:17px;color:#fff;-webkit-text-stroke:0.3px #fff">Legende<br>anzeigen</div>
<svg style="left:0;top:0" width="1918" height="909"><g stroke="#dcdcdc" stroke-width="1" fill="none">
<path d="M1504 383.5 H1880"/>
<path d="M1504 407.5 H1880"/>
<path d="M1504 431.5 H1880"/>
<path d="M1504 455.5 H1880"/>
<path d="M1504 479.5 H1880"/>
<path d="M1504 503.5 H1880"/>
<path d="M1504 527.5 H1880"/>
<path d="M1512.5 383 V535"/>
<path d="M1531.375 383 V535"/>
<path d="M1555.875 383 V535"/>
<path d="M1580.375 383 V535"/>
<path d="M1604.875 383 V535"/>
<path d="M1629.375 383 V535"/>
<path d="M1653.875 383 V535"/>
<path d="M1678.375 383 V535"/>
<path d="M1702.875 383 V535"/>
<path d="M1727.375 383 V535"/>
<path d="M1751.875 383 V535"/>
<path d="M1776.375 383 V535"/>
<path d="M1800.875 383 V535"/>
<path d="M1825.375 383 V535"/>
<path d="M1849.875 383 V535"/>
<path d="M1874.375 383 V535"/>
</g>
<rect x="1600.2" y="397.5" width="2.5" height="130.0" fill="#f4b5bd"/>
<text x="1501.5" y="387" text-anchor="end" font-family="Liberation Sans" font-size="12" fill="#666">300</text>
<text x="1501.5" y="411" text-anchor="end" font-family="Liberation Sans" font-size="12" fill="#666">250</text>
<text x="1501.5" y="435" text-anchor="end" font-family="Liberation Sans" font-size="12" fill="#666">200</text>
<text x="1501.5" y="459" text-anchor="end" font-family="Liberation Sans" font-size="12" fill="#666">150</text>
<text x="1501.5" y="483" text-anchor="end" font-family="Liberation Sans" font-size="12" fill="#666">100</text>
<text x="1501.5" y="507" text-anchor="end" font-family="Liberation Sans" font-size="12" fill="#666">50</text>
<text x="1501.5" y="531" text-anchor="end" font-family="Liberation Sans" font-size="12" fill="#666">0</text>
<text transform="translate(1520.125 544.8) rotate(-45)" text-anchor="end" font-family="Liberation Sans" font-size="12" fill="#666">01</text>
<text transform="translate(1544.625 544.8) rotate(-45)" text-anchor="end" font-family="Liberation Sans" font-size="12" fill="#666">03</text>
<text transform="translate(1569.125 544.8) rotate(-45)" text-anchor="end" font-family="Liberation Sans" font-size="12" fill="#666">05</text>
<text transform="translate(1593.625 544.8) rotate(-45)" text-anchor="end" font-family="Liberation Sans" font-size="12" fill="#666">07</text>
<text transform="translate(1618.125 544.8) rotate(-45)" text-anchor="end" font-family="Liberation Sans" font-size="12" fill="#666">09</text>
<text transform="translate(1642.625 544.8) rotate(-45)" text-anchor="end" font-family="Liberation Sans" font-size="12" fill="#666">11</text>
<text transform="translate(1667.125 544.8) rotate(-45)" text-anchor="end" font-family="Liberation Sans" font-size="12" fill="#666">13</text>
<text transform="translate(1691.625 544.8) rotate(-45)" text-anchor="end" font-family="Liberation Sans" font-size="12" fill="#666">15</text>
<text transform="translate(1716.125 544.8) rotate(-45)" text-anchor="end" font-family="Liberation Sans" font-size="12" fill="#666">17</text>
<text transform="translate(1740.625 544.8) rotate(-45)" text-anchor="end" font-family="Liberation Sans" font-size="12" fill="#666">19</text>
<text transform="translate(1765.125 544.8) rotate(-45)" text-anchor="end" font-family="Liberation Sans" font-size="12" fill="#666">21</text>
<text transform="translate(1789.625 544.8) rotate(-45)" text-anchor="end" font-family="Liberation Sans" font-size="12" fill="#666">23</text>
<text transform="translate(1814.125 544.8) rotate(-45)" text-anchor="end" font-family="Liberation Sans" font-size="12" fill="#666">25</text>
<text transform="translate(1838.625 544.8) rotate(-45)" text-anchor="end" font-family="Liberation Sans" font-size="12" fill="#666">27</text>
<text transform="translate(1863.125 544.8) rotate(-45)" text-anchor="end" font-family="Liberation Sans" font-size="12" fill="#666">29</text>
<text transform="translate(1471.5 454.5) rotate(-90)" text-anchor="middle" font-family="Liberation Sans" font-size="12" fill="#666">Erlöse in €</text>
</svg>
<svg style="left:0;top:0" width="1918" height="909"><g stroke="#dcdcdc" stroke-width="1" fill="none">
<path d="M1521.3 699.9 H1880"/>
<path d="M1521.3 728.68 H1880"/>
<path d="M1521.3 757.46 H1880"/>
<path d="M1521.3 786.24 H1880"/>
<path d="M1521.3 815.02 H1880"/>
<path d="M1521.3 843.8 H1880"/>
<path d="M1529.8 699.4 V851.3"/>
<path d="M1547.32 699.4 V851.3"/>
<path d="M1570.6799999999998 699.4 V851.3"/>
<path d="M1594.04 699.4 V851.3"/>
<path d="M1617.3999999999999 699.4 V851.3"/>
<path d="M1640.76 699.4 V851.3"/>
<path d="M1664.12 699.4 V851.3"/>
<path d="M1687.48 699.4 V851.3"/>
<path d="M1710.84 699.4 V851.3"/>
<path d="M1734.2 699.4 V851.3"/>
<path d="M1757.56 699.4 V851.3"/>
<path d="M1780.92 699.4 V851.3"/>
<path d="M1804.28 699.4 V851.3"/>
<path d="M1827.6399999999999 699.4 V851.3"/>
<path d="M1851.0 699.4 V851.3"/>
<path d="M1874.36 699.4 V851.3"/>
</g>
<rect x="1553.8" y="787" width="1.3" height="56.799999999999955" fill="#f08080"/>
<rect x="1545.2" y="835" width="1.8" height="8.799999999999955" fill="#b4f0b4"/>
<rect x="1569" y="835" width="1.8" height="8.799999999999955" fill="#b4f0b4"/>
<rect x="1615.6" y="835" width="1.8" height="8.799999999999955" fill="#b4f0b4"/>
<rect x="1686.5" y="710.8" width="1.5" height="133.0" fill="#a8e8e8"/>
<rect x="1686" y="835" width="1.8" height="8.799999999999955" fill="#b4f0b4"/>
<rect x="1732.2" y="835" width="1.8" height="8.799999999999955" fill="#b4f0b4"/>
<rect x="1802.5" y="835" width="1.8" height="8.799999999999955" fill="#b4f0b4"/>
<text x="1517.6" y="703.4" text-anchor="end" font-family="Liberation Sans" font-size="12" fill="#666">25.000</text>
<text x="1517.6" y="732.18" text-anchor="end" font-family="Liberation Sans" font-size="12" fill="#666">20.000</text>
<text x="1517.6" y="760.96" text-anchor="end" font-family="Liberation Sans" font-size="12" fill="#666">15.000</text>
<text x="1517.6" y="789.74" text-anchor="end" font-family="Liberation Sans" font-size="12" fill="#666">10.000</text>
<text x="1517.6" y="818.52" text-anchor="end" font-family="Liberation Sans" font-size="12" fill="#666">5.000</text>
<text x="1517.6" y="847.3" text-anchor="end" font-family="Liberation Sans" font-size="12" fill="#666">0</text>
<text transform="translate(1536.6399999999999 861.0999999999999) rotate(-45)" text-anchor="end" font-family="Liberation Sans" font-size="12" fill="#666">1</text>
<text transform="translate(1560.0 861.0999999999999) rotate(-45)" text-anchor="end" font-family="Liberation Sans" font-size="12" fill="#666">3</text>
<text transform="translate(1583.36 861.0999999999999) rotate(-45)" text-anchor="end" font-family="Liberation Sans" font-size="12" fill="#666">5</text>
<text transform="translate(1606.72 861.0999999999999) rotate(-45)" text-anchor="end" font-family="Liberation Sans" font-size="12" fill="#666">7</text>
<text transform="translate(1630.08 861.0999999999999) rotate(-45)" text-anchor="end" font-family="Liberation Sans" font-size="12" fill="#666">9</text>
<text transform="translate(1653.44 861.0999999999999) rotate(-45)" text-anchor="end" font-family="Liberation Sans" font-size="12" fill="#666">11</text>
<text transform="translate(1676.8 861.0999999999999) rotate(-45)" text-anchor="end" font-family="Liberation Sans" font-size="12" fill="#666">13</text>
<text transform="translate(1700.1599999999999 861.0999999999999) rotate(-45)" text-anchor="end" font-family="Liberation Sans" font-size="12" fill="#666">15</text>
<text transform="translate(1723.52 861.0999999999999) rotate(-45)" text-anchor="end" font-family="Liberation Sans" font-size="12" fill="#666">17</text>
<text transform="translate(1746.8799999999999 861.0999999999999) rotate(-45)" text-anchor="end" font-family="Liberation Sans" font-size="12" fill="#666">19</text>
<text transform="translate(1770.24 861.0999999999999) rotate(-45)" text-anchor="end" font-family="Liberation Sans" font-size="12" fill="#666">21</text>
<text transform="translate(1793.6 861.0999999999999) rotate(-45)" text-anchor="end" font-family="Liberation Sans" font-size="12" fill="#666">23</text>
<text transform="translate(1816.96 861.0999999999999) rotate(-45)" text-anchor="end" font-family="Liberation Sans" font-size="12" fill="#666">25</text>
<text transform="translate(1840.32 861.0999999999999) rotate(-45)" text-anchor="end" font-family="Liberation Sans" font-size="12" fill="#666">27</text>
<text transform="translate(1863.6799999999998 861.0999999999999) rotate(-45)" text-anchor="end" font-family="Liberation Sans" font-size="12" fill="#666">29</text>
<text transform="translate(1471.5 770) rotate(-90)" text-anchor="middle" font-family="Liberation Sans" font-size="12" fill="#666">Gewicht in kg</text>
</svg>
<div class="a" style="left:1418px;top:562.5px;width:30px;height:30px;border-radius:50%;background:#46464f;border:2.5px solid #fff;box-shadow:0 0 3px rgba(0,0,0,.2)"></div>
<svg style="left:1418px;top:562.5px" width="30" height="30"><path d="M12.5 9.5 L17.5 15 L12.5 20.5" fill="none" stroke="#fff" stroke-width="2.2" stroke-linecap="round" stroke-linejoin="round"/></svg></body></html>
